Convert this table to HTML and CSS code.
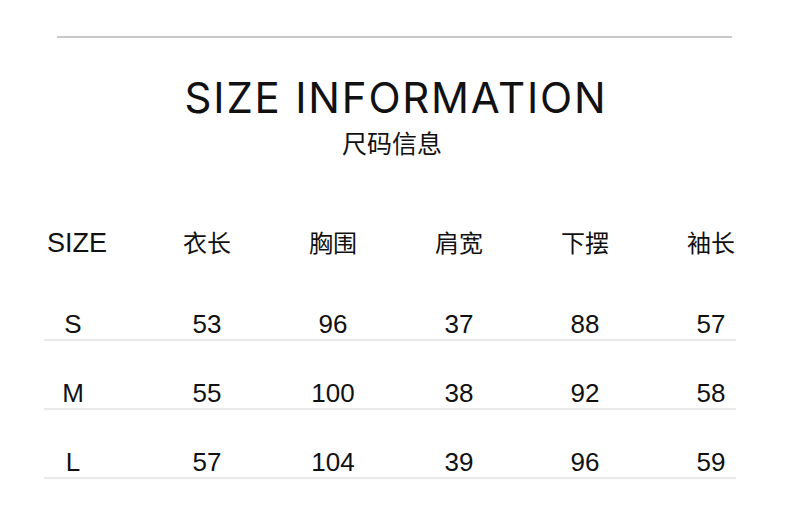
FILE: index.html
```html
<!DOCTYPE html>
<html lang="zh-CN">
<head>
<meta charset="utf-8">
<title>SIZE INFORMATION</title>
<link rel="stylesheet" href="styles.css">
</head>
<body>
<div class="page">
  <div class="top-rule"></div>
  <h1 class="title">SIZE INFORMATION</h1>
  <h2 class="subtitle">尺码信息</h2>
  <div class="table">
    <div class="head">
      <div class="cell first">SIZE</div>
      <div class="cell cn">衣长</div>
      <div class="cell cn">胸围</div>
      <div class="cell cn">肩宽</div>
      <div class="cell cn">下摆</div>
      <div class="cell cn">袖长</div>
    </div>
    <div class="row">
      <div class="cell first">S</div>
      <div class="cell">53</div>
      <div class="cell">96</div>
      <div class="cell">37</div>
      <div class="cell">88</div>
      <div class="cell">57</div>
    </div>
    <div class="row">
      <div class="cell first">M</div>
      <div class="cell">55</div>
      <div class="cell">100</div>
      <div class="cell">38</div>
      <div class="cell">92</div>
      <div class="cell">58</div>
    </div>
    <div class="row">
      <div class="cell first">L</div>
      <div class="cell">57</div>
      <div class="cell">104</div>
      <div class="cell">39</div>
      <div class="cell">96</div>
      <div class="cell">59</div>
    </div>
  </div>
</div>
</body>
</html>
```
FILE: styles.css
```css
html, body {
  margin: 0;
  padding: 0;
  background: #ffffff;
}
.page {
  width: 790px;
  height: 527px;
  overflow: hidden;
  color: #111111;
}
.top-rule {
  margin: 36px 0 0 57px;
  width: 675px;
  height: 2px;
  background: #c9c9c9;
}
.title {
  margin: 35px 0 0 0;
  padding-left: 2px;
  font-family: "Inter", "Liberation Sans", sans-serif;
  font-weight: 400;
  font-size: 42px;
  letter-spacing: 1.8px;
  line-height: 50px;
  text-align: center;
  color: #111111;
}
.subtitle {
  margin: 4px 0 0 0;
  padding-right: 6px;
  font-family: "Noto Sans CJK SC", sans-serif;
  font-weight: 400;
  font-size: 25px;
  line-height: 30px;
  text-align: center;
  color: #111111;
}
.table {
  margin: 70px 0 0 44px;
  width: 692px;
}
.head, .row {
  display: grid;
  grid-template-columns: 62px repeat(5, 50px);
  justify-content: space-between;
}
.cell {
  text-align: center;
  white-space: nowrap;
  display: flex;
  justify-content: center;
}
.head {
  padding-bottom: 14px;
  align-items: baseline;
  font-family: "Liberation Sans", Arial, sans-serif;
  font-size: 27px;
  line-height: 30px;
}
.head .first {
  padding-left: 4px;
}
.head .cn {
  font-family: "Noto Sans CJK SC", sans-serif;
  font-weight: 400;
  font-size: 24px;
}
.row {
  padding-top: 39px;
  padding-bottom: 2px;
  border-bottom: 2px solid #e9e9e9;
  font-family: "Liberation Sans", Arial, sans-serif;
  font-size: 26px;
  line-height: 26px;
}
.row .first {
  padding-right: 4px;
}
```
